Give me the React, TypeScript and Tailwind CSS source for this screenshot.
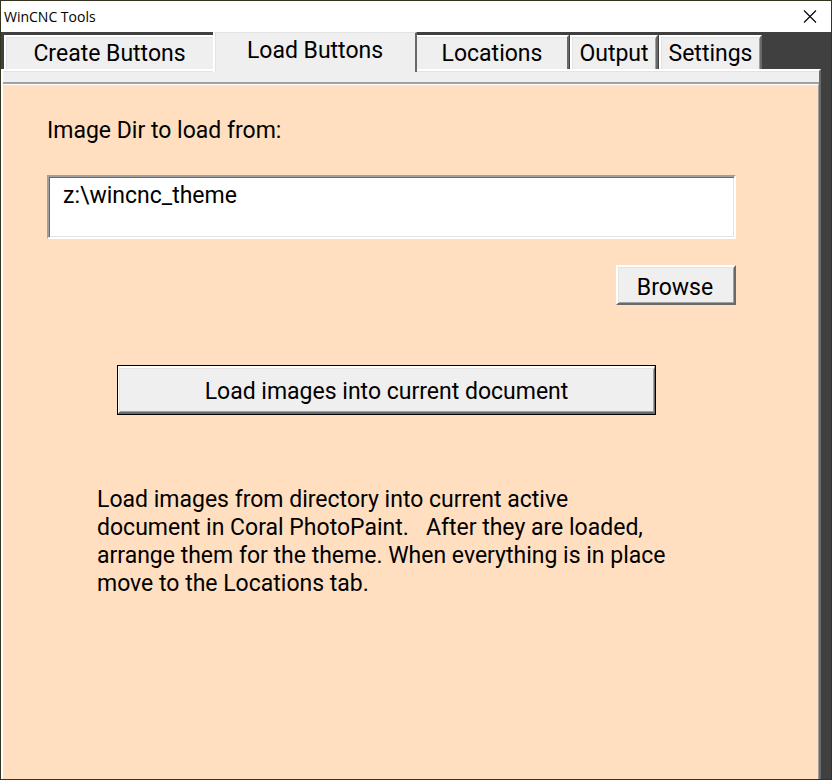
import { useState } from "react";

const tabs = [
  { name: "Create Buttons", width: "w-[209px]", idle: "border-l-2 border-l-white shadow-[inset_1px_1px_0_#e3e3e3]" },
  { name: "Load Buttons", width: "w-[204px]", idle: "border-x-2 border-l-white border-r-[#696969]" },
  { name: "Locations", width: "w-[152px]", idle: "border-r-2 border-r-[#696969] shadow-[inset_0_1px_0_#e3e3e3]" },
  { name: "Output", width: "w-[88px] ml-px", idle: "border-x-2 border-l-white border-r-[#696969] shadow-[inset_1px_1px_0_#e3e3e3,inset_-1px_0_0_#a0a0a0]" },
  { name: "Settings", width: "w-[103px] ml-px", idle: "border-x-2 border-l-white border-r-[#696969] shadow-[inset_1px_1px_0_#e3e3e3,inset_-1px_0_0_#a0a0a0]" },
];

const raised =
  "border-t-white border-l-white border-r-[#696969] border-b-[#696969] bg-[#efefef] shadow-[inset_1px_1px_0_#e3e3e3,inset_-1px_-1px_0_#a0a0a0]";

export default function App() {
  const [active, setActive] = useState("Load Buttons");
  const [dir, setDir] = useState("z:\\wincnc_theme");

  return (
    <div className="flex min-h-screen flex-col border border-[#33331f] bg-[#404040] font-['Roboto','Liberation_Sans',sans-serif] text-[23px] leading-7 text-black">
      <header className="flex h-[31px] items-center justify-between bg-white pl-[3px] pr-[14px]">
        <h1 className="font-['Open_Sans','Noto_Sans',sans-serif] text-sm leading-5">WinCNC Tools</h1>
        <button type="button" aria-label="Close">
          <svg width="14" height="14" viewBox="0 0 14 14" fill="none" stroke="#000" strokeWidth="1.1">
            <path d="M1 0.5 L13 12.5 M13 0.5 L1 12.5" />
          </svg>
        </button>
      </header>

      <div role="tablist" className="flex h-[37px] items-end pl-[3px]">
        {tabs.map((tab) => {
          const selected = tab.name === active;
          return (
            <button
              key={tab.name}
              type="button"
              role="tab"
              aria-selected={selected}
              onClick={() => setActive(tab.name)}
              className={`${tab.width} shrink-0 whitespace-nowrap bg-[#efefef] text-center ${
                selected
                  ? "relative -mb-[3px] h-[40px] border-x-2 border-t border-l-white border-r-[#696969] border-t-[#e3e3e3] pb-[3px] shadow-[inset_1px_0_0_#e3e3e3]"
                  : `h-[34px] border-t-2 border-t-white pt-[2px] ${tab.idle}`
              }`}
            >
              {tab.name}
            </button>
          );
        })}
      </div>

      <main className="mr-[10px] flex grow flex-col border-x-2 border-t-2 border-l-white border-r-[#696969] border-t-white bg-[#efefef]">
        <div className="h-[13px] border-b-2 border-t border-b-[#a0a0a0] border-t-[#e3e3e3]" />
        <section className="grow border-x border-t border-l-[#e3e3e3] border-r-[#a0a0a0] border-t-white bg-[#ffdfc0] pl-[43px] pr-[82px] pt-8">
          <label htmlFor="dir" className="block">
            Image Dir to load from:
          </label>
          <textarea
            id="dir"
            value={dir}
            onChange={(e) => setDir(e.target.value)}
            spellCheck={false}
            className="mt-[30px] block h-16 w-full resize-none overflow-hidden border-2 border-b-white border-l-[#a0a0a0] border-r-white border-t-[#a0a0a0] bg-white px-[14px] py-[5px] shadow-[inset_1px_1px_0_#696969,inset_-1px_-1px_0_#e3e3e3] outline-none"
          />
          <div className="mt-[26px] flex justify-end">
            <button type="button" className={`h-10 w-[120px] border-2 pr-[2px] pt-[5px] ${raised}`}>
              Browse
            </button>
          </div>
          <div className="ml-[70px] mr-20 mt-[60px] border border-black">
            <button type="button" className={`block h-12 w-full border-x border-y-2 pt-[4px] ${raised}`}>
              Load images into current document
            </button>
          </div>
          <p className="ml-[50px] mt-[71px] max-w-[600px]">
            Load images from directory into current active
            <br />
            document in Coral PhotoPaint.&nbsp;&nbsp; After they are loaded,
            <br />
            arrange them for the theme. When everything is in place
            <br />
            move to the Locations tab.
          </p>
        </section>
      </main>
    </div>
  );
}
